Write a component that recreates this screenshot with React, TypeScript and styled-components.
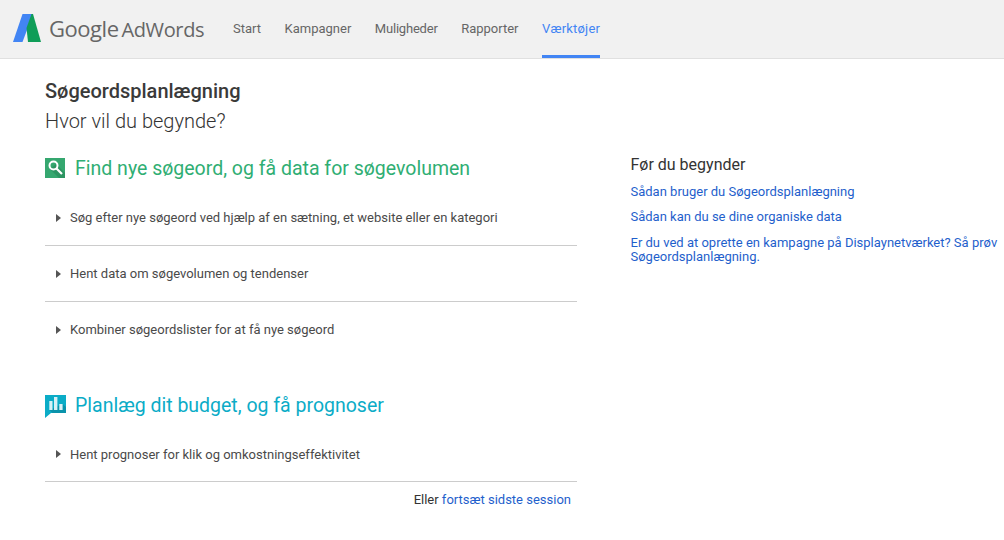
import React from "react";
import styled, { createGlobalStyle } from "styled-components";

const Global = createGlobalStyle`
  html, body { margin: 0; padding: 0; background: #fff; }
  body { font-family: Roboto, "Liberation Sans", sans-serif; overflow: hidden; }
`;

const Page = styled.div`
  width: 1004px;
  height: 540px;
  overflow: hidden;
`;

const Header = styled.header`
  height: 58px;
  background: #f1f1f1;
  border-bottom: 1px solid #e0e0e0;
  display: flex;
  align-items: stretch;
  padding-left: 13px;
`;

const Logo = styled.div`
  display: flex;
  align-items: center;
  gap: 8px;
  width: 220px;
  flex: none;
  padding-bottom: 2px;
  box-sizing: border-box;
`;

const LogoText = styled.span`
  font-family: "Open Sans", sans-serif;
  font-size: 20px;
  color: #666;
  white-space: nowrap;
  letter-spacing: -0.37px;
  word-spacing: -2px;
`;

const LogoStrong = styled.span`
  font-size: 22px;
  letter-spacing: -0.45px;
`;

const Nav = styled.nav`
  display: flex;
  gap: 23.5px;
`;

const NavItem = styled.a<{ $active?: boolean; $track?: number }>`
  display: flex;
  align-items: center;
  box-sizing: border-box;
  height: 58px;
  padding-bottom: 1px;
  font-size: 13px;
  letter-spacing: ${(p) => p.$track ?? 0}px;
  color: ${(p) => (p.$active ? "#4285f4" : "#666")};
  border-bottom: 3px solid ${(p) => (p.$active ? "#4285f4" : "transparent")};
  border-top: 3px solid transparent;
`;

const Body = styled.main`
  display: flex;
  padding-left: 45px;
`;

const Left = styled.div`
  width: 532px;
  flex: none;
`;

const Title = styled.h1`
  margin: 20px 0 0;
  font-size: 20px;
  line-height: 24px;
  font-weight: 500;
  color: #3a3a3a;
`;

const Subtitle = styled.h2`
  margin: 6px 0 0;
  font-size: 20px;
  line-height: 24px;
  font-weight: 300;
  color: #333;
`;

const SectionHead = styled.div<{ $color: string; $top: number }>`
  display: flex;
  align-items: center;
  margin-top: ${(p) => p.$top}px;
  font-size: 19.5px;
  line-height: 24px;
  color: ${(p) => p.$color};
`;

const IconSlot = styled.span<{ $lift?: number }>`
  display: flex;
  flex: none;
  width: 30px;
  margin-bottom: ${(p) => p.$lift ?? 0}px;
`;

const Rows = styled.div`
  margin-top: 9px;
`;

const Row = styled.div<{ $height?: number }>`
  display: flex;
  align-items: center;
  height: ${(p) => p.$height ?? 55}px;
  padding-left: 11px;
  gap: 9px;
  font-size: 13px;
  color: #4a4a4a;
  border-bottom: 1px solid #ccc;
  &:last-child { border-bottom-color: transparent; }
`;

const LastRows = styled(Rows)`
  ${Row}:last-child { border-bottom-color: #ccc; }
`;

const Arrow = styled.span`
  width: 0;
  height: 0;
  border-left: 5px solid #555;
  border-top: 4.5px solid transparent;
  border-bottom: 4.5px solid transparent;
`;

const Resume = styled.div`
  margin-top: 9px;
  padding-right: 6px;
  text-align: right;
  font-size: 13px;
  line-height: 18px;
  color: #333;
`;

const Link = styled.a`
  color: #1f5fcc;
`;

const Side = styled.aside`
  margin-left: 53.5px;
  padding-top: 96px;
  width: 373.5px;
`;

const SideTitle = styled.h3`
  margin: 0 0 10px;
  font-size: 16px;
  line-height: 20px;
  font-weight: 400;
  color: #333;
`;

const SideLink = styled.a`
  display: block;
  margin-bottom: 11px;
  font-size: 13px;
  line-height: 14.4px;
  color: #1f5fcc;
`;

export default function App() {
  return (
    <Page>
      <Global />
      <Header>
        <Logo>
          <svg width="28" height="28" viewBox="0 0 28 28">
            <path d="M9.500 0H20L9.500 28H0z" fill="#4285f4" />
            <path d="M18.500 0H20l8 28H15l-1.500-14z" fill="#0f9d58" />
          </svg>
          <LogoText>
            <LogoStrong>Google</LogoStrong> AdWords
          </LogoText>
        </Logo>
        <Nav>
          <NavItem>Start</NavItem>
          <NavItem>Kampagner</NavItem>
          <NavItem $track={-0.2}>Muligheder</NavItem>
          <NavItem>Rapporter</NavItem>
          <NavItem $active $track={0.2}>Værktøjer</NavItem>
        </Nav>
      </Header>
      <Body>
        <Left>
          <Title>Søgeordsplanlægning</Title>
          <Subtitle>Hvor vil du begynde?</Subtitle>
          <SectionHead $color="#2fae73" $top={24}>
            <IconSlot $lift={2}>
              <svg width="20" height="20" viewBox="0 0 20 20">
                <rect width="20" height="20" fill="#35a76f" />
                <path d="M5 11 14 20H20V15L11 6z" fill="#2c9461" />
                <circle cx="8.500" cy="7.500" r="4" fill="none" stroke="#fff" strokeWidth="2" />
                <path d="M11.500 10.500 17 16" stroke="#fff" strokeWidth="2.200" />
              </svg>
            </IconSlot>
            Find nye søgeord, og få data for søgevolumen
          </SectionHead>
          <Rows>
            <Row><Arrow />Søg efter nye søgeord ved hjælp af en sætning, et website eller en kategori</Row>
            <Row><Arrow />Hent data om søgevolumen og tendenser</Row>
            <Row><Arrow />Kombiner søgeordslister for at få nye søgeord</Row>
          </Rows>
          <SectionHead $color="#0bacc7" $top={36}>
            <IconSlot>
              <svg width="21" height="23" viewBox="0 0 21 23">
                <path d="M0 0h21v18H6L0 23z" fill="#0bacc7" />
                <path d="M4.500 15 7.500 18H21V12L17.500 9z" fill="#0a93ab" />
                <path d="M4.300 6h3.200v9H4.300zM9 2h3.400v13H9zM14.300 9h3.300v6h-3.300z" fill="#d8f0f5" />
              </svg>
            </IconSlot>
            Planlæg dit budget, og få prognoser
          </SectionHead>
          <LastRows>
            <Row $height={54}><Arrow />Hent prognoser for klik og omkostningseffektivitet</Row>
          </LastRows>
          <Resume>Eller <Link>fortsæt sidste session</Link></Resume>
        </Left>
        <Side>
          <SideTitle>Før du begynder</SideTitle>
          <SideLink>Sådan bruger du Søgeordsplanlægning</SideLink>
          <SideLink>Sådan kan du se dine organiske data</SideLink>
          <SideLink>Er du ved at oprette en kampagne på Displaynetværket? Så prøv Søgeordsplanlægning.</SideLink>
        </Side>
      </Body>
    </Page>
  );
}
